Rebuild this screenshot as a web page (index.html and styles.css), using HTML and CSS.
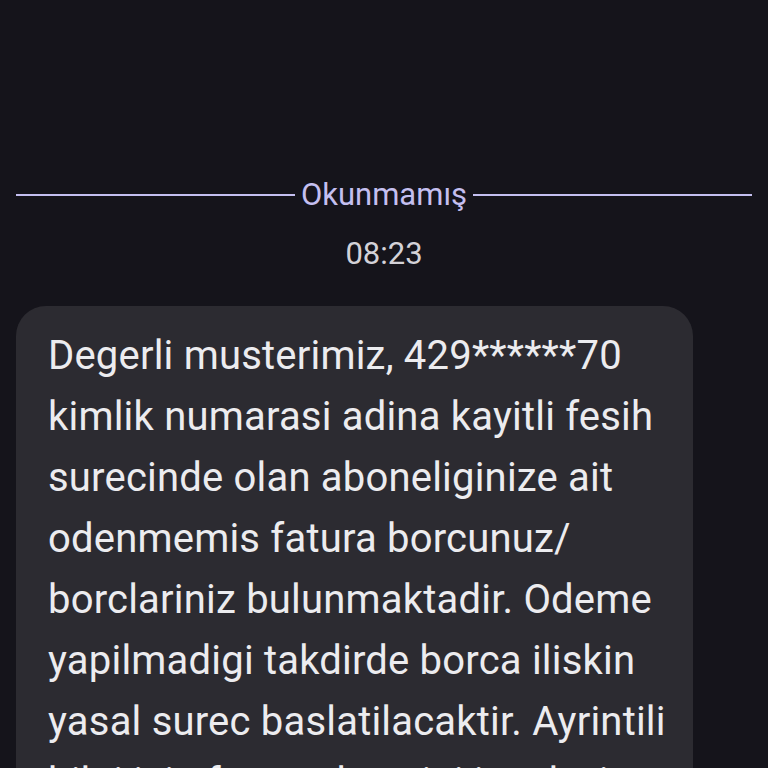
FILE: index.html
```html
<!DOCTYPE html>
<html lang="tr">
<head>
<meta charset="utf-8">
<link rel="stylesheet" href="styles.css">
</head>
<body>
<div class="screen">
  <div class="divider">
    <span class="rule"></span>
    <span class="label">Okunmamış</span>
    <span class="rule"></span>
  </div>
  <div class="time">08:23</div>
  <div class="bubble">
    <p class="msg">Degerli musterimiz, 429******70<br>kimlik numarasi adina kayitli fesih<br>surecinde olan aboneliginize ait<br>odenmemis fatura borcunuz/<br>borclariniz bulunmaktadir. Odeme<br>yapilmadigi takdirde borca iliskin<br>yasal surec baslatilacaktir. Ayrintili<br>bilgi icin fatura detayini inceleyin</p>
  </div>
</div>
</body>
</html>
```

FILE: styles.css
```css
html, body {
  margin: 0;
  padding: 0;
  background: #15141b;
  overflow: hidden;
}
.screen {
  width: 768px;
  height: 768px;
  overflow: hidden;
  font-family: Roboto, "Noto Sans", sans-serif;
  padding-top: 177px;
  box-sizing: border-box;
}
.divider {
  display: flex;
  align-items: center;
  gap: 6px;
  padding: 0 16px;
  height: 36px;
}
.rule {
  flex: 1;
  height: 2px;
  background: #c4bff0;
}
.label {
  color: #c4bff0;
  font-size: 31px;
  line-height: 36px;
}
.time {
  margin-top: 23px;
  text-align: center;
  color: #d3d2d8;
  font-size: 31px;
  line-height: 36px;
}
.bubble {
  margin: 34px 0 0 16px;
  width: 677px;
  box-sizing: border-box;
  background: #2c2b31;
  border-radius: 30px;
  padding: 19px 0 0 32px;
  height: 600px;
  overflow: hidden;
}
.msg {
  margin: 0;
  color: #ececef;
  font-size: 40px;
  line-height: 61px;
  letter-spacing: 0.2px;
  white-space: nowrap;
}
```
